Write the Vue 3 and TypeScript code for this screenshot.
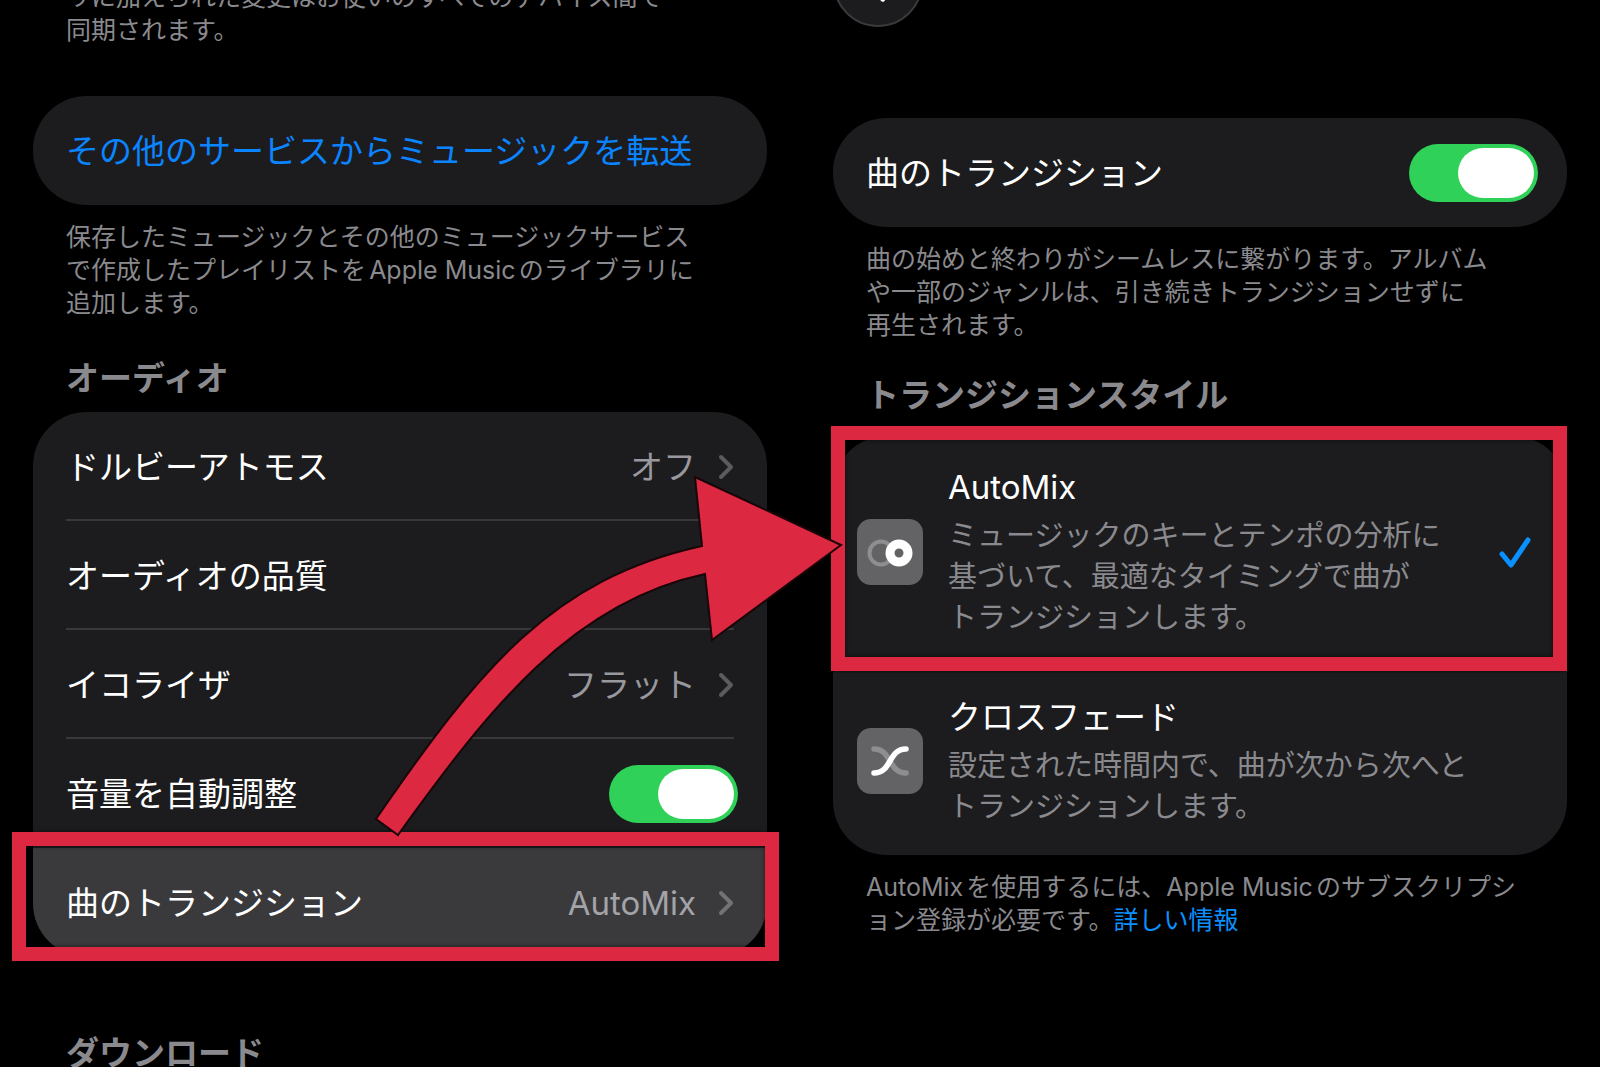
<script setup lang="ts">
import { ref } from 'vue'

interface AudioRow {
  label: string
  value: string
}

interface TransitionStyle {
  id: 'automix' | 'crossfade'
  title: string
  lines: string[]
}

const audioRows: AudioRow[] = [
  { label: 'ドルビーアトモス', value: 'オフ' },
  { label: 'オーディオの品質', value: '' },
  { label: 'イコライザ', value: 'フラット' },
]

const styles: TransitionStyle[] = [
  {
    id: 'automix',
    title: 'AutoMix',
    lines: ['ミュージックのキーとテンポの分析に', '基づいて、最適なタイミングで曲が', 'トランジションします。'],
  },
  {
    id: 'crossfade',
    title: 'クロスフェード',
    lines: ['設定された時間内で、曲が次から次へと', 'トランジションします。'],
  },
]

const soundCheck = ref(true)
const transitions = ref(true)
const selected = ref<'automix' | 'crossfade'>('automix')
</script>

<template>
  <main class="screen">
    <section class="panel">
      <p class="note note-top">リに加えられた変更はお使いのすべてのデバイス間で<br />同期されます。</p>

      <div class="card card-transfer">
        <a class="row link" href="#transfer">その他のサービスからミュージックを転送</a>
      </div>
      <p class="note">
        保存したミュージックとその他のミュージックサービス<br />で作成したプレイリストをApple Musicのライブラリに<br />追加します。
      </p>

      <h2 class="heading heading-audio">オーディオ</h2>
      <div class="card">
        <button v-for="row in audioRows" :key="row.label" type="button" class="row divided">
          <span class="label">{{ row.label }}</span>
          <span class="value">{{ row.value }}</span>
          <svg class="chevron" viewBox="0 0 16 26" aria-hidden="true"><path d="M3 3 13 13 3 23" /></svg>
        </button>
        <label class="row">
          <span class="label">音量を自動調整</span>
          <input v-model="soundCheck" class="switch" type="checkbox" role="switch" />
        </label>
        <button type="button" class="row active">
          <span class="label">曲のトランジション</span>
          <span class="value">AutoMix</span>
          <svg class="chevron" viewBox="0 0 16 26" aria-hidden="true"><path d="M3 3 13 13 3 23" /></svg>
          <span class="frame frame-row"></span>
        </button>
      </div>

      <h2 class="heading heading-download">ダウンロード</h2>
    </section>

    <section class="panel">
      <button type="button" class="back" aria-label="戻る">
        <svg viewBox="0 0 90 90" aria-hidden="true"><path d="M50 27 32 45 50 63" /></svg>
      </button>

      <div class="card card-toggle">
        <label class="row">
          <span class="label">曲のトランジション</span>
          <input v-model="transitions" class="switch" type="checkbox" role="switch" />
        </label>
      </div>
      <p class="note">
        曲の始めと終わりがシームレスに繋がります。アルバム<br />や一部のジャンルは、引き続きトランジションせずに<br />再生されます。
      </p>

      <h2 class="heading heading-style">トランジションスタイル</h2>
      <div class="card">
        <label v-for="style in styles" :key="style.id" class="option">
          <input v-model="selected" class="radio" type="radio" name="style" :value="style.id" />
          <span class="tile">
            <svg v-if="style.id === 'automix'" viewBox="0 0 66 66" aria-hidden="true">
              <circle cx="24" cy="34" r="11.5" fill="none" stroke="#8e8e90" stroke-width="4" />
              <circle cx="42" cy="34" r="9" fill="#636366" stroke="#fff" stroke-width="9" />
            </svg>
            <svg v-else viewBox="0 0 66 66" aria-hidden="true" fill="none" stroke-width="5.5" stroke-linecap="round">
              <path stroke="#8e8e90" d="M17 21C35 21 31 45 49 45" />
              <path stroke="#fff" d="M17 45C35 45 31 21 49 21" />
            </svg>
          </span>
          <span class="text">
            <span class="title">{{ style.title }}</span>
            <span v-for="line in style.lines" :key="line" class="desc">{{ line }}</span>
          </span>
          <svg v-if="selected === style.id" class="check" viewBox="0 0 32 32" aria-hidden="true"><path d="M3 18 12 29 29 4" /></svg>
          <span v-if="style.id === 'automix'" class="frame frame-option"></span>
        </label>
      </div>
      <p class="note">
        AutoMixを使用するには、Apple Musicのサブスクリプシ<br />ョン登録が必要です。<a class="more" href="#more">詳しい情報</a>
      </p>
    </section>

    <svg class="arrow" viewBox="370 470 480 380" aria-hidden="true">
      <path d="M376 819C480 668 552 579 702 546L695 477 841 545 712 640 705 574C573 602 490 707 398 835Z" />
    </svg>
  </main>
</template>

<style>
body {
  margin: 0;
  background: #000;
}
</style>

<style scoped>
.screen {
  position: relative;
  display: grid;
  grid-template-columns: 1fr 1fr;
  height: 100vh;
  overflow: hidden;
  background: #000;
  color: #fff;
  font-family: Inter, "Noto Sans CJK JP", sans-serif;
  font-size: 33px;
  line-height: 44px;
  text-autospace: normal;
}
.panel {
  min-width: 0;
  padding: 0 33px;
}
.note {
  margin: 16px 0 0;
  padding-left: 33px;
  color: #8a8a8e;
  font-size: 25px;
  line-height: 33px;
  white-space: nowrap;
}
.note-top {
  margin-top: -19px;
}
.card {
  border-radius: 54px;
  background: #1c1c1e;
}
.card-transfer {
  margin-top: 49px;
}
.card-toggle {
  margin-top: 91px;
}
.heading {
  margin: 0;
  padding-left: 33px;
  color: #8a8a8e;
  font-size: 33px;
  font-weight: 600;
  line-height: 44px;
}
.heading-audio {
  margin: 36px 0 12px;
}
.heading-style {
  margin: 31px 0 19px;
}
.heading-download {
  margin-top: 74px;
}
.row {
  position: relative;
  display: flex;
  align-items: center;
  box-sizing: border-box;
  width: 100%;
  height: 109px;
  padding: 0 33px;
  border: 0;
  background: none;
  color: inherit;
  font: inherit;
  text-align: left;
  white-space: nowrap;
}
.divided::after {
  content: "";
  position: absolute;
  right: 33px;
  bottom: 0;
  left: 33px;
  height: 2px;
  background: #38383a;
}
.label {
  flex: 1;
}
.link {
  color: #0a84ff;
  text-decoration: none;
}
.value {
  color: #98989e;
}
.chevron {
  width: 16px;
  height: 26px;
  margin-left: 22px;
  fill: none;
  stroke: #5b5b5f;
  stroke-width: 4;
  stroke-linecap: round;
  stroke-linejoin: round;
}
.active {
  border-radius: 0 0 54px 54px;
  background: #3a3a3c;
}
.active .value {
  color: #a3a3a8;
}
.active .chevron {
  stroke: #727276;
}
.switch {
  flex: none;
  display: flex;
  align-items: center;
  box-sizing: border-box;
  width: 129px;
  height: 58px;
  margin: 0 -4px 0 0;
  padding: 4px;
  border-radius: 29px;
  background: #39393d;
  appearance: none;
}
.switch::before {
  content: "";
  width: 76px;
  height: 50px;
  border-radius: 25px;
  background: #fff;
}
.switch:checked {
  justify-content: flex-end;
  background: #30d158;
}
.back {
  display: block;
  width: 90px;
  height: 90px;
  margin: -63px 0 0;
  padding: 0;
  border: 2px solid #3a3a3c;
  border-radius: 50%;
  background: #1c1c1e;
}
.back svg {
  display: block;
  fill: none;
  stroke: #fff;
  stroke-width: 5;
  stroke-linecap: round;
}
.option {
  position: relative;
  display: flex;
  align-items: center;
  padding: 29px 36px 28px 24px;
  white-space: nowrap;
}
.radio {
  position: absolute;
  margin: 0;
  opacity: 0;
}
.tile {
  width: 66px;
  height: 66px;
  margin-right: 25px;
  border-radius: 14px;
  background: #636366;
}
.tile svg {
  display: block;
}
.text {
  flex: 1;
  display: flex;
  flex-direction: column;
}
.title {
  margin-bottom: 6px;
}
.desc {
  color: #8a8a8e;
  font-size: 29px;
  line-height: 41px;
}
.check {
  width: 32px;
  height: 32px;
  fill: none;
  stroke: #0a91ff;
  stroke-width: 5;
  stroke-linecap: round;
  stroke-linejoin: round;
}
.more {
  color: #0a91ff;
  text-decoration: none;
}
.frame {
  position: absolute;
  border: 14px solid #dc2841;
  box-shadow: 0 0 4px rgba(0, 0, 0, 0.6), inset 0 0 4px rgba(0, 0, 0, 0.6);
  pointer-events: none;
}
.frame-row {
  inset: -16px -12px -4px -21px;
}
.frame-option {
  inset: -10px 0 -5px -2px;
}
.arrow {
  position: absolute;
  top: 470px;
  left: 370px;
  width: 480px;
  height: 380px;
  fill: #dc2841;
  stroke: #1a0508;
  stroke-width: 2;
  pointer-events: none;
}
</style>
